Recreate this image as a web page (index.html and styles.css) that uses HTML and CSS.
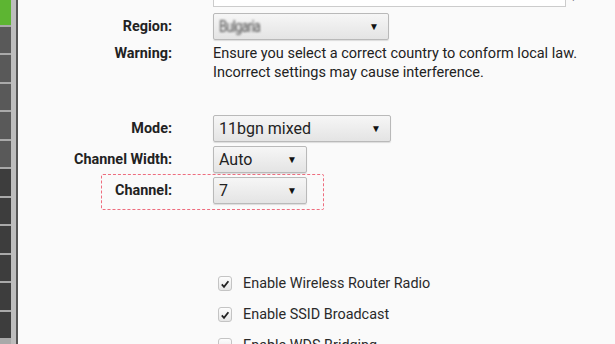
FILE: index.html
```html
<!DOCTYPE html>
<html lang="en">
<head>
    <meta charset="UTF-8">
    <title>Wireless Settings</title>
    <link rel="stylesheet" href="styles.css">
</head>
<body>
    <div class="page">
        <div class="sidebar">
            <div class="tab active"></div>
            <div class="tab"></div>
            <div class="tab"></div>
            <div class="tab"></div>
            <div class="tab"></div>
            <div class="tab"></div>
            <div class="tab dark"></div>
            <div class="tab dark"></div>
            <div class="tab dark"></div>
            <div class="tab dark"></div>
            <div class="tab dark"></div>
            <div class="tab dark"></div>
        </div>
        <div class="content">
            <div class="row row-name">
                <label>Wireless Network Name:</label>
                <div class="field-line">
                    <div class="text-input">Vodafone</div>
                    <span class="hint">(</span>
                </div>
            </div>
            <div class="row row-region">
                <label>Region:</label>
                <div class="select select-region"><span class="blurred">Bulgaria</span><span class="arrow">&#9660;</span></div>
            </div>
            <div class="row row-warning">
                <label>Warning:</label>
                <p class="warning">Ensure you select a correct country to conform local law.<br>Incorrect settings may cause interference.</p>
            </div>
            <div class="row row-mode">
                <label>Mode:</label>
                <div class="select select-wide"><span>11bgn mixed</span><span class="arrow">&#9660;</span></div>
            </div>
            <div class="row row-width">
                <label>Channel Width:</label>
                <div class="select select-small"><span>Auto</span><span class="arrow">&#9660;</span></div>
            </div>
            <div class="row row-channel">
                <label>Channel:</label>
                <div class="select select-small"><span>7</span><span class="arrow">&#9660;</span></div>
            </div>

            <div class="checks">
                <div class="check"><span class="box checked"><svg viewBox="0 0 10 10" width="10" height="10"><path d="M1.8 5.4 L4 7.8 L8.4 2.2" fill="none" stroke="#222" stroke-width="1.8"/></svg></span>Enable Wireless Router Radio</div>
                <div class="check"><span class="box checked"><svg viewBox="0 0 10 10" width="10" height="10"><path d="M1.8 5.4 L4 7.8 L8.4 2.2" fill="none" stroke="#222" stroke-width="1.8"/></svg></span>Enable SSID Broadcast</div>
                <div class="check"><span class="box"></span>Enable WDS Bridging</div>
            </div>
        </div>
    </div>
</body>
</html>
```
FILE: styles.css
```css
html, body {
    margin: 0;
    height: 100%;
    overflow: hidden;
}
body {
    font-family: Roboto, 'Liberation Sans', Arial, sans-serif;
    color: #222;
    background: #fafafa;
}
.page {
    display: flex;
    height: 344px;
}
.sidebar {
    width: 11px;
    flex-shrink: 0;
    background: #a9a9a9;
    border-right: 5px solid #bdbdbd;
    box-shadow: 2px 0 0 #555;
    margin-right: 2px;
    display: flex;
    flex-direction: column;
    gap: 2px;
}
.tab {
    height: 26.5px;
    background: #595959;
    flex-shrink: 0;
}
.tab.active {
    background: #5db532;
    height: 24.5px;
}
.tab.dark {
    background: #3d3d3d;
}
.content {
    flex: 1;
    background: #fafafa;
    margin-top: -20px;
}
.row {
    display: grid;
    grid-template-columns: 154px auto;
    column-gap: 41px;
    align-items: center;
}
.row label {
    text-align: right;
    font-weight: 700;
    font-size: 14.4px;
    color: #222;
    white-space: nowrap;
}
.field-line {
    display: flex;
    align-items: center;
    gap: 4px;
}
.text-input {
    width: 345px;
    height: 25px;
    border: 1px solid #ccc;
    background: #fff;
    font-size: 14px;
    color: #aaa;
    line-height: 25px;
    padding-left: 6px;
}
.hint {
    font-size: 12px;
    color: #555;
}
.select {
    height: 27px;
    box-sizing: border-box;
    border: 1px solid #b9b9b9;
    border-radius: 2px;
    background: linear-gradient(#f6f6f6, #e4e4e4);
    box-shadow: 0 1px 1px rgba(0,0,0,0.12);
    display: flex;
    align-items: center;
    justify-content: space-between;
    padding: 0 9px 0 5px;
    font-size: 16px;
    color: #222;
}
.select-region { width: 176px; }
.select-wide { width: 178px; }
.select-small { width: 94px; }
.arrow {
    font-size: 10px;
    color: #111;
}
.blurred {
    font-size: 13px;
    color: #555;
    filter: blur(0.9px);
    letter-spacing: -0.8px;
    transform: scaleY(1.3);
}
.row-name { height: 27px; }
.row-region { margin-top: 6px; }
.row-warning { margin-top: 4px; align-items: start; }
.row-warning label { line-height: 19px; }
.warning {
    margin: 0;
    font-size: 14.5px;
    line-height: 19px;
    color: #222;
}
.row-mode { margin-top: 33px; }
.row-width { margin-top: 4px; }
.row-channel {
    margin-top: 4px;
    position: relative;
}
.row-channel::before {
    content: "";
    position: absolute;
    left: 83px;
    top: -3px;
    width: 221px;
    height: 34px;
    border: 1.5px dashed rgba(236, 74, 96, 0.8);
    border-radius: 2px;
}
.checks {
    margin-top: 70px;
    padding-left: 200px;
    display: flex;
    flex-direction: column;
    gap: 12px;
}
.check {
    display: flex;
    align-items: center;
    font-size: 14.4px;
    color: #2a2a2a;
    height: 19px;
}
.box {
    width: 12px;
    height: 13px;
    border: 1px solid #c4c4c4;
    border-radius: 3px;
    background: linear-gradient(#fdfdfd, #e6e6e6);
    display: flex;
    align-items: center;
    justify-content: center;
    margin-right: 11px;
}
```
